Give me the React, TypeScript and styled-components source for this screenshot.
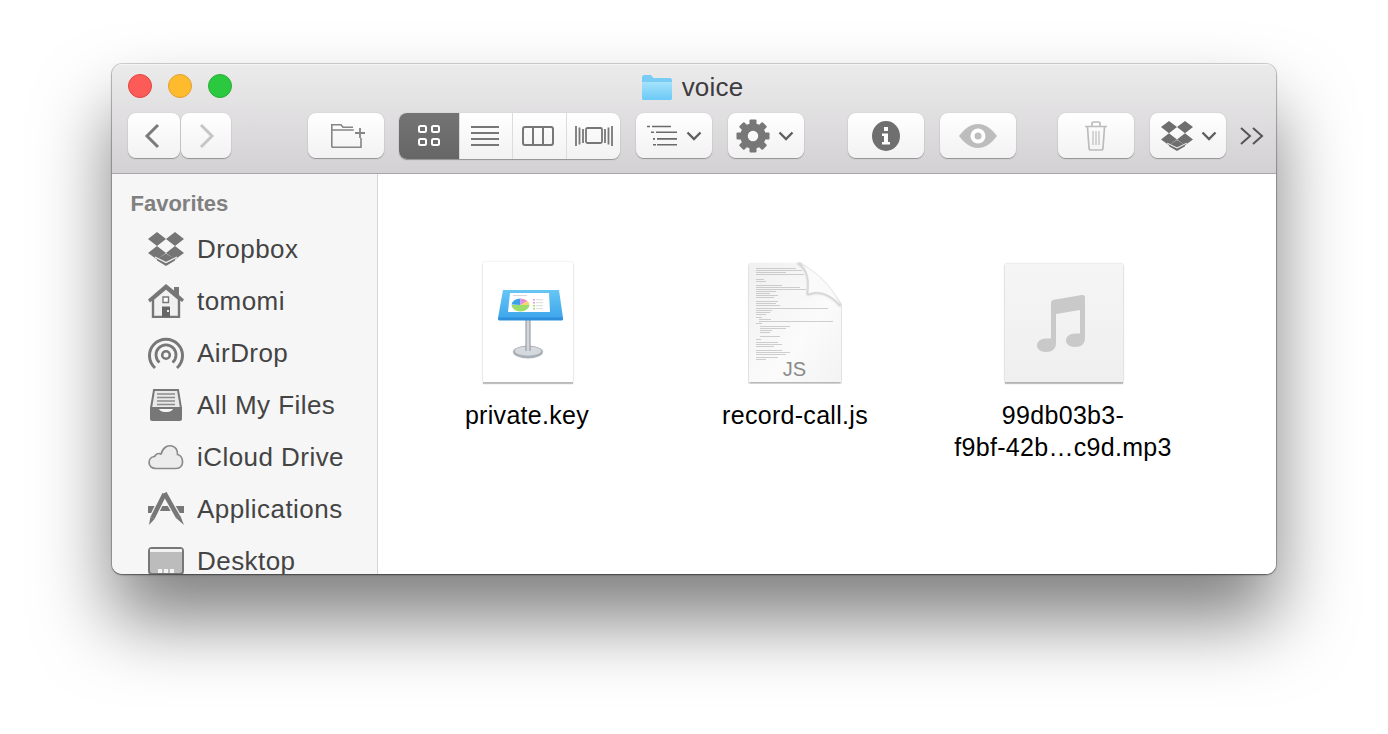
import React from 'react'
import styled, { createGlobalStyle } from 'styled-components'

const Global = createGlobalStyle`
  html, body { margin: 0; background: #fff; }
  body { font-family: "Liberation Sans", Arial, sans-serif; }
`

const Stage = styled.div`
  width: 1388px;
  height: 734px;
  padding: 64px 112px 0;
  box-sizing: border-box;
  overflow: hidden;
`
const Win = styled.div`
  width: 1164px;
  height: 510px;
  border-radius: 10px;
  overflow: hidden;
  display: flex;
  flex-direction: column;
  box-shadow: 0 46px 74px rgba(0, 0, 0, 0.5), 0 0 0 1px rgba(0, 0, 0, 0.16), 0 1px 2px rgba(0, 0, 0, 0.45);
`
const Chrome = styled.header`
  height: 110px;
  box-sizing: border-box;
  flex: none;
  background: linear-gradient(#ecebec, #d3d1d3);
  border-top: 1px solid #f6f5f6;
  border-bottom: 1px solid #a8a7a8;
`
const TitleRow = styled.div`
  height: 44px;
  margin-bottom: 4px;
  display: grid;
  grid-template-columns: 1fr auto 1fr;
  align-items: center;
  padding: 0 16px;
`
const Lights = styled.div`
  display: flex;
  gap: 16px;
  margin-top: -2px;
`
const Light = styled.span<{ $fill: string; $edge: string }>`
  width: 24px;
  height: 24px;
  box-sizing: border-box;
  border-radius: 50%;
  background: ${p => p.$fill};
  border: 1px solid ${p => p.$edge};
`
const Title = styled.div`
  display: flex;
  align-items: center;
  gap: 10px;
  font-size: 26px;
  letter-spacing: 0.2px;
  color: #3d3b3d;
  margin-right: 3px;
`
const Tools = styled.div`
  display: flex;
  align-items: center;
  padding-left: 16px;
  height: 45px;
`
// $nudge moves the glyph off the centre of the button, in px
const Btn = styled.div<{ $w: number; $ml?: number; $nudge?: number }>`
  width: ${p => p.$w}px;
  margin-left: ${p => p.$ml ?? 0}px;
  padding-left: ${p => Math.max(p.$nudge ?? 0, 0) * 2}px;
  padding-right: ${p => Math.max(-(p.$nudge ?? 0), 0) * 2}px;
  height: 45px;
  flex: none;
  box-sizing: border-box;
  border-radius: 8px;
  background: linear-gradient(#ffffff, #f2f2f2);
  box-shadow: 0 1px 1px rgba(0, 0, 0, 0.3), 0 0 1px rgba(0, 0, 0, 0.25);
  display: flex;
  align-items: center;
  justify-content: center;
  gap: 8px;
`
const Segments = styled.div`
  display: flex;
  width: 221px;
  height: 46px;
  margin-left: 15px;
  border-radius: 8px;
  overflow: hidden;
  background: linear-gradient(#ffffff, #f2f2f2);
  box-shadow: 0 1px 1px rgba(0, 0, 0, 0.3), 0 0 1px rgba(0, 0, 0, 0.25);
`
const Seg = styled.div<{ $w: number; $on?: boolean; $tight?: boolean }>`
  width: ${p => p.$w}px;
  padding-right: ${p => (p.$tight ? 3 : 0)}px;
  flex: none;
  box-sizing: border-box;
  display: flex;
  align-items: center;
  justify-content: center;
  background: ${p => (p.$on ? 'linear-gradient(#747474, #666666)' : 'transparent')};
  & + & { border-left: 1px solid #dcdcdc; }
`
const More = styled.div`
  margin-left: 14px;
  display: flex;
  align-items: center;
`
const Body = styled.div`
  flex: 1;
  min-height: 0;
  display: flex;
`
const Sidebar = styled.nav`
  width: 266px;
  flex: none;
  box-sizing: border-box;
  overflow: hidden;
  background: #f6f6f6;
  border-right: 1px solid #d5d5d5;
  padding: 17px 0 0 19px;
`
const SideHead = styled.div`
  font-size: 22px;
  font-weight: 700;
  line-height: 26px;
  color: #808080;
  margin-bottom: 6px;
  margin-left: -0.5px;
`
const SideRow = styled.div`
  height: 52px;
  display: flex;
  align-items: center;
  gap: 13px;
  padding-left: 17px;
  font-size: 26px;
  letter-spacing: 0.45px;
  color: #444444;
`
const IconSlot = styled.span`
  width: 36px;
  height: 36px;
  flex: none;
  display: flex;
  align-items: center;
  justify-content: center;
`
const Files = styled.main`
  flex: 1;
  background: #fff;
  display: flex;
  align-items: flex-start;
  padding: 88px 0 0 15px;
`
const FileCell = styled.div`
  width: 268px;
  display: flex;
  flex-direction: column;
  align-items: center;
`
const Thumb = styled.div`
  position: relative;
  height: 120px;
  display: flex;
  align-items: flex-start;
  justify-content: center;
`
const Label = styled.div`
  margin-top: 17px;
  font-size: 25px;
  letter-spacing: 0.3px;
  line-height: 32px;
  color: #000;
  text-align: center;
  white-space: nowrap;
`
const Badge = styled.span`
  position: absolute;
  right: 36px;
  bottom: 1px;
  font-size: 20px;
  line-height: 24px;
  color: #8a8a8a;
`
const Sheet = styled.div`
  width: 90px;
  height: 120px;
  margin-left: 2px;
  background: #fff;
  box-shadow: 0 2px 1px rgba(0, 0, 0, 0.24), 0 0 2px rgba(0, 0, 0, 0.14);
`
const Tile = styled.div`
  width: 118px;
  height: 118px;
  margin: 2px 0 0 2px;
  background: linear-gradient(#f5f5f5, #efefef);
  box-shadow: 0 2px 1px rgba(0, 0, 0, 0.24), 0 0 2px rgba(0, 0, 0, 0.22);
  display: flex;
`

const G = '#777777'

const DropboxGlyph = ({ w = 36, h = 34, c = '#757575' }: { w?: number; h?: number; c?: string }) => (
  <svg width={w} height={h} viewBox="0 0 36 34" fill={c}>
    <path d="M9 0l9 7-9 7-9-7zM27 0l9 7-9 7-9-7zM9 14l9 7-9 6.500-9-6.500zM27 14l9 7-9 6.500-9-6.500z" />
    <path d="M9 27l9-5.500 9 5.500v1.500L18 34l-9-5.500z" />
    <path d="M7 25l11 5.500L29 25" fill="none" stroke="#f4f4f4" strokeWidth="1.200" />
  </svg>
)
const HomeGlyph = () => (
  <svg width="36" height="34" viewBox="0 0 36 34">
    <path d="M5 15L18 4l13 11v18H5z" fill="#f1f1f1" stroke={G} strokeWidth="2.400" />
    <path d="M0 15.500L18 0l8 6.500V3h5v8l5 4.500-2 2.500L18 5 2 18.500z" fill={G} />
    <path d="M15 13h5.500v5.500H15z" fill="#fff" stroke={G} strokeWidth="1.400" />
    <path d="M14 22.500h8V33h-8z" fill="#666" />
    <path d="M19 26h2v2h-2z" fill="#eee" />
  </svg>
)
const AirDropGlyph = () => (
  <svg width="36" height="34" viewBox="0 0 36 34" fill="none" stroke={G}>
    <path d="M7 32A16.500 16.500 0 1 1 29 32" strokeWidth="3" />
    <path d="M11.500 26.500A10 10 0 1 1 24.500 26.500" strokeWidth="2.800" />
    <circle cx="18" cy="19" r="3.800" strokeWidth="2.600" />
  </svg>
)
const FilesGlyph = () => (
  <svg width="32" height="32" viewBox="0 0 32 32">
    <path d="M4 1h24l3 18H1z" fill="#e9e9e9" stroke={G} strokeWidth="2" />
    <path d="M7 5h18M7 8.500h18M7 12h18M7 15.500h18" stroke="#8c8c8c" strokeWidth="1.500" />
    <path d="M0 18h8c1 3 3 5 8 5s7-2 8-5h8v12c0 1-1 2-2 2H2c-1 0-2-1-2-2z" fill={G} />
  </svg>
)
const CloudGlyph = () => (
  <svg width="36" height="26" viewBox="0 0 36 26">
    <path d="M8 24.500c-9 0-9-11-1.500-12 1.500-3 4.500-3.500 6.500-2.500C15 3 20 1 24 2c4 1 5.500 5 5.500 8.500C36 12 37 24.500 28 24.500z" fill="#ececec" stroke="#8a8a8a" strokeWidth="1.700" />
  </svg>
)
const AppsGlyph = () => (
  <svg width="36" height="34" viewBox="0 0 36 34" fill={G}>
    <path d="M0 14h10l-3.500 7H0zM26 14h10v7h-6.500zM13 14h10l2.500 5h-15z" />
    <path d="M16.500 2L4 27" stroke="#f6f6f6" strokeWidth="7" />
    <path d="M16.500 1L30.500 26" stroke="#f6f6f6" strokeWidth="7" />
    <path d="M16.500 2L4.500 26" stroke={G} strokeWidth="4.600" />
    <path d="M16.500 1L30 25" stroke={G} strokeWidth="4.600" />
    <path d="M2.400 25l4.200 2.100L1 33zM28 26l4.200-2.400L36 33z" />
  </svg>
)
const DesktopGlyph = () => (
  <svg width="36" height="28" viewBox="0 0 36 28">
    <rect x="1" y="1" width="34" height="26" rx="3" fill="#bcbcbc" stroke={G} strokeWidth="2" />
    <path d="M2 2h32v3H2z" fill="#f2f2f2" />
    <path d="M10 22h4v4h-4zM16 22h4v4h-4zM22 22h4v4h-4z" fill="#f4f4f4" />
  </svg>
)

const Gear = () => (
  <svg width="34" height="34" viewBox="0 0 34 34" fill={G}>
    {[0, 45, 90, 135, 180, 225, 270, 315].map(a => (
      <rect key={a} x="13.500" y="0.500" width="7" height="8" rx="1" transform={`rotate(${a} 17 17)`} />
    ))}
    <circle cx="17" cy="17" r="9" fill="none" stroke={G} strokeWidth="7.500" />
  </svg>
)
const Chevron = ({ c = '#5f5f5f' }: { c?: string }) => (
  <svg width="16" height="10" viewBox="0 0 16 10" fill="none" stroke={c} strokeWidth="2.400">
    <path d="M1.500 1.500L8 8l6.500-6.500" />
  </svg>
)

const SIDEBAR_ITEMS: [string, React.ReactNode][] = [
  ['Dropbox', <DropboxGlyph />],
  ['tomomi', <HomeGlyph />],
  ['AirDrop', <AirDropGlyph />],
  ['All My Files', <FilesGlyph />],
  ['iCloud Drive', <CloudGlyph />],
  ['Applications', <AppsGlyph />],
  ['Desktop', <DesktopGlyph />],
]

// x, y, width of the tiny code lines on the js page
const CODE: number[][] = [
  [8, 6, 40], [8, 8, 46], [8, 10, 30], [8, 12, 48], [8, 17, 8], [8, 19, 10], [8, 23, 26], [8, 25, 44], [8, 27, 50],
  [8, 29, 20], [8, 31, 14], [8, 33, 22], [8, 35, 18], [8, 39, 22], [8, 41, 20], [8, 43, 24], [8, 46, 72], [8, 48, 16],
  [8, 50, 14], [8, 52, 10], [8, 55, 6], [11, 57, 12], [11, 59, 74], [8, 61, 6], [12, 64, 30], [12, 66, 26],
  [12, 68, 12], [12, 70, 10], [12, 74, 20], [8, 77, 5], [8, 80, 22], [8, 82, 26], [8, 84, 18], [8, 88, 26], [8, 90, 34],
  [8, 92, 30], [8, 95, 22], [8, 97, 10],
]

const KeynotePage = () => (
  <Sheet>
    <svg width="90" height="120" viewBox="0 0 90 120">
      <defs>
        <linearGradient id="pole" x1="0" x2="1" y1="0" y2="0">
          <stop offset="0" stopColor="#8d9299" />
          <stop offset="0.5" stopColor="#e4e7ea" />
          <stop offset="1" stopColor="#8d9299" />
        </linearGradient>
        <linearGradient id="desk" x1="0" x2="0" y1="0" y2="1">
          <stop offset="0" stopColor="#66c6f5" />
          <stop offset="1" stopColor="#3ea6ec" />
        </linearGradient>
      </defs>
      <ellipse cx="45" cy="90" rx="15" ry="6.500" fill="#a9b0b7" />
      <ellipse cx="45" cy="89" rx="13" ry="4.500" fill="#d5d9dd" />
      <path d="M42.500 58h5v31h-5z" fill="url(#pole)" />
      <path d="M20 28h56l4 28H15z" fill="url(#desk)" />
      <path d="M15 55.500h65v1.500c0 1-1 1.500-2 1.500H17c-1 0-2-.5-2-1.500z" fill="#2e8fdc" />
      <path d="M27 31h39l1 19H25z" fill="#fff" />
      <path d="M37.500 43v-6.500a9 6.500 0 0 0-9 6z" fill="#3aa0e8" />
      <path d="M37.500 36.500a9 6.500 0 0 1 7 2.500l-7 4z" fill="#e98ad8" />
      <path d="M44.500 39a9 6.500 0 0 1 2 4h-9z" fill="#f2d66a" />
      <path d="M46.500 43a9 6.500 0 0 1-18 0z" fill="#9bdc6a" />
      <path d="M50 37h2v1.500h-2zM50 40h2v1.500h-2z" fill="#e8a0dc" />
      <path d="M50 43h2v1.500h-2zM50 46h2v1.500h-2z" fill="#a3dc72" />
      <path d="M53 37.700h7M53 40.700h7M53 43.700h7M53 46.700h7M30 33.500h14" stroke="#cfcfcf" strokeWidth="0.800" />
    </svg>
  </Sheet>
)

const ScriptPage = () => (
  <Thumb>
    <svg width="94" height="122" viewBox="0 0 94 122">
      <defs>
        <filter id="soft" x="-10%" y="-10%" width="120%" height="120%">
          <feDropShadow dx="0" dy="1.500" stdDeviation="0.800" floodColor="#000" floodOpacity="0.35" />
        </filter>
        <filter id="fuzz" x="-20%" y="-20%" width="140%" height="140%">
          <feGaussianBlur stdDeviation="1.200" />
        </filter>
        <linearGradient id="paper" x1="0" x2="1" y1="0" y2="1">
          <stop offset="0" stopColor="#f0f0f0" />
          <stop offset="0.6" stopColor="#fbfbfb" />
          <stop offset="1" stopColor="#f3f3f3" />
        </linearGradient>
      </defs>
      <path d="M1 1h49c16 6 34 23 43 43v76H1z" fill="url(#paper)" filter="url(#soft)" />
      {CODE.map(([x, y, w]) => (
        <rect key={`${x}-${y}`} x={x} y={y} width={w} height="0.500" fill="#a2a2a2" />
      ))}
      <path d="M50 1c10 5 12 17 10 31 12-5 24 1 33 12" fill="none" stroke="#b5b5b5" strokeWidth="2" filter="url(#fuzz)" />
      <path d="M50 1c10 5 12 17 10 31 12-5 24 1 33 12C84 24 66 7 50 1z" fill="#fafafa" stroke="#d8d8d8" strokeWidth="0.600" />
    </svg>
    <Badge>JS</Badge>
  </Thumb>
)

const AudioTile = () => (
  <Tile>
    <svg width="118" height="118" viewBox="0 0 118 118">
      <path d="M46 39c0-2 1-3 3-3.300l28-4.700c2-.3 3 .5 3 2.500V74c0 6-4 9-10 9s-9-3-9-6.500c0-4 4-7 9-7h5V46l-24 4v29c0 6-4 9-10 9s-9-3-9-6.500c0-4 4-7 9-7h5z" fill="#c9c9c9" />
    </svg>
  </Tile>
)

export default function App() {
  return (
    <>
      <Global />
      <Stage>
        <Win>
          <Chrome>
            <TitleRow>
              <Lights>
                <Light $fill="#fc5b57" $edge="#e3433f" />
                <Light $fill="#febb2e" $edge="#e1a032" />
                <Light $fill="#2ac940" $edge="#2bac36" />
              </Lights>
              <Title>
                <svg width="30" height="25" viewBox="0 0 30 25">
                  <defs>
                    <linearGradient id="fold" x1="0" x2="0" y1="0" y2="1">
                      <stop offset="0" stopColor="#a5e2fb" />
                      <stop offset="1" stopColor="#6cc9f7" />
                    </linearGradient>
                  </defs>
                  <path d="M0 2c0-1 1-2 2-2h7l2.500 3H28c1 0 2 1 2 2v18c0 1-1 2-2 2H2c-1 0-2-1-2-2z" fill="#79cdf5" />
                  <path d="M0 7h30v16c0 1-1 2-2 2H2c-1 0-2-1-2-2z" fill="url(#fold)" />
                </svg>
                voice
              </Title>
              <span />
            </TitleRow>
            <Tools>
              <Btn $w={52} $nudge={-2}>
                <svg width="16" height="26" viewBox="0 0 16 26" fill="none" stroke="#7b7b7b" strokeWidth="3"><path d="M14 2L3 13l11 11" /></svg>
              </Btn>
              <Btn $w={50} $ml={1} $nudge={1}>
                <svg width="16" height="26" viewBox="0 0 16 26" fill="none" stroke="#c6c6c6" strokeWidth="3"><path d="M2 2l11 11L2 24" /></svg>
              </Btn>
              <Btn $w={76} $ml={77} $nudge={2}>
                <svg width="34" height="24" viewBox="0 0 34 24" fill="none" stroke="#858585" strokeWidth="1.600">
                  <path d="M.8 23.200V.8H10l2 2.500h10M.8 6h22M.8 23.200H30V14" />
                  <path d="M29 4v10M24 9h10" strokeWidth="1.800" />
                </svg>
              </Btn>
              <Segments>
                <Seg $w={60} $on>
                  <svg width="22" height="22" viewBox="0 0 22 22" fill="none" stroke="#fff" strokeWidth="2">
                    <rect x="1" y="1" width="7" height="6" rx="1.500" />
                    <rect x="14" y="1" width="7" height="6" rx="1.500" />
                    <rect x="1" y="14" width="7" height="6" rx="1.500" />
                    <rect x="14" y="14" width="7" height="6" rx="1.500" />
                  </svg>
                </Seg>
                <Seg $w={53} $tight>
                  <svg width="28" height="20" viewBox="0 0 28 20" stroke={G} strokeWidth="2"><path d="M0 1h28M0 7h28M0 13h28M0 19h28" /></svg>
                </Seg>
                <Seg $w={54} $tight>
                  <svg width="32" height="20" viewBox="0 0 32 20" fill="none" stroke={G} strokeWidth="2"><rect x="1" y="1" width="30" height="18" rx="2" /><path d="M11 1v18M21 1v18" /></svg>
                </Seg>
                <Seg $w={54}>
                  <svg width="38" height="22" viewBox="0 0 38 22" fill="none" stroke={G} strokeWidth="1.800"><rect x="11" y="3" width="16" height="15" rx="1.500" /><path d="M1 1v20M4.500 2.500v17M8 4v14M37 1v20M33.500 2.500v17M30 4v14" /></svg>
                </Seg>
              </Segments>
              <Btn $w={76} $ml={16}>
                <svg width="31" height="22" viewBox="0 0 31 22" stroke="#6a6a6a" strokeWidth="1.700"><path d="M0 1h3M5 1h19M4 7h3M9 7h21M6 14h2M10 14h20M6 20h3M10 20h20" transform="translate(0 .5) scale(1 .96)" /></svg>
                <Chevron />
              </Btn>
              <Btn $w={76} $ml={16} $nudge={-1}>
                <Gear />
                <Chevron />
              </Btn>
              <Btn $w={76} $ml={44}>
                <svg width="28" height="30" viewBox="0 0 28 30">
                  <ellipse cx="14" cy="15" rx="14" ry="15" fill="#6f6f6f" />
                  <path d="M12 6h4v4h-4zM10 12.500h6V21h2v2.500h-8V21h2v-6h-2z" fill="#fff" />
                </svg>
              </Btn>
              <Btn $w={76} $ml={16}>
                <svg width="38" height="24" viewBox="0 0 38 24">
                  <path d="M0 12C6 4 12 0 19 0s13 4 19 12c-6 8-12 12-19 12S6 20 0 12z" fill="#bdbdbd" />
                  <circle cx="19" cy="12" r="7.500" fill="#fff" />
                  <circle cx="19" cy="12" r="3.500" fill="#bdbdbd" />
                </svg>
              </Btn>
              <Btn $w={76} $ml={42}>
                <svg width="22" height="30" viewBox="0 0 22 30" fill="none" stroke="#bcbcbc" strokeWidth="1.700">
                  <path d="M0 5.500h22M7 5V2.500C7 1.500 8 1 9 1h4c1 0 2 .5 2 1.500V5M2.500 6l1.500 21c0 1 1 2 2 2h10c1 0 2-1 2-2l1.500-21" />
                  <path d="M8 10v14M11 10v14M14 10v14" strokeWidth="1.200" />
                </svg>
              </Btn>
              <Btn $w={76} $ml={16} $nudge={1}>
                <DropboxGlyph w={32} h={32} c="#6e6e6e" />
                <Chevron />
              </Btn>
              <More>
                <svg width="24" height="18" viewBox="0 0 24 18" fill="none" stroke="#555" strokeWidth="2"><path d="M1 1l9 8-9 8M13 1l9 8-9 8" /></svg>
              </More>
            </Tools>
          </Chrome>
          <Body>
            <Sidebar>
              <SideHead>Favorites</SideHead>
              {SIDEBAR_ITEMS.map(([name, icon]) => (
                <SideRow key={name}>
                  <IconSlot>{icon}</IconSlot>
                  {name}
                </SideRow>
              ))}
            </Sidebar>
            <Files>
              <FileCell>
                <Thumb><KeynotePage /></Thumb>
                <Label>private.key</Label>
              </FileCell>
              <FileCell>
                <ScriptPage />
                <Label>record-call.js</Label>
              </FileCell>
              <FileCell>
                <Thumb><AudioTile /></Thumb>
                <Label>99db03b3-<br />f9bf-42b…c9d.mp3</Label>
              </FileCell>
            </Files>
          </Body>
        </Win>
      </Stage>
    </>
  )
}
